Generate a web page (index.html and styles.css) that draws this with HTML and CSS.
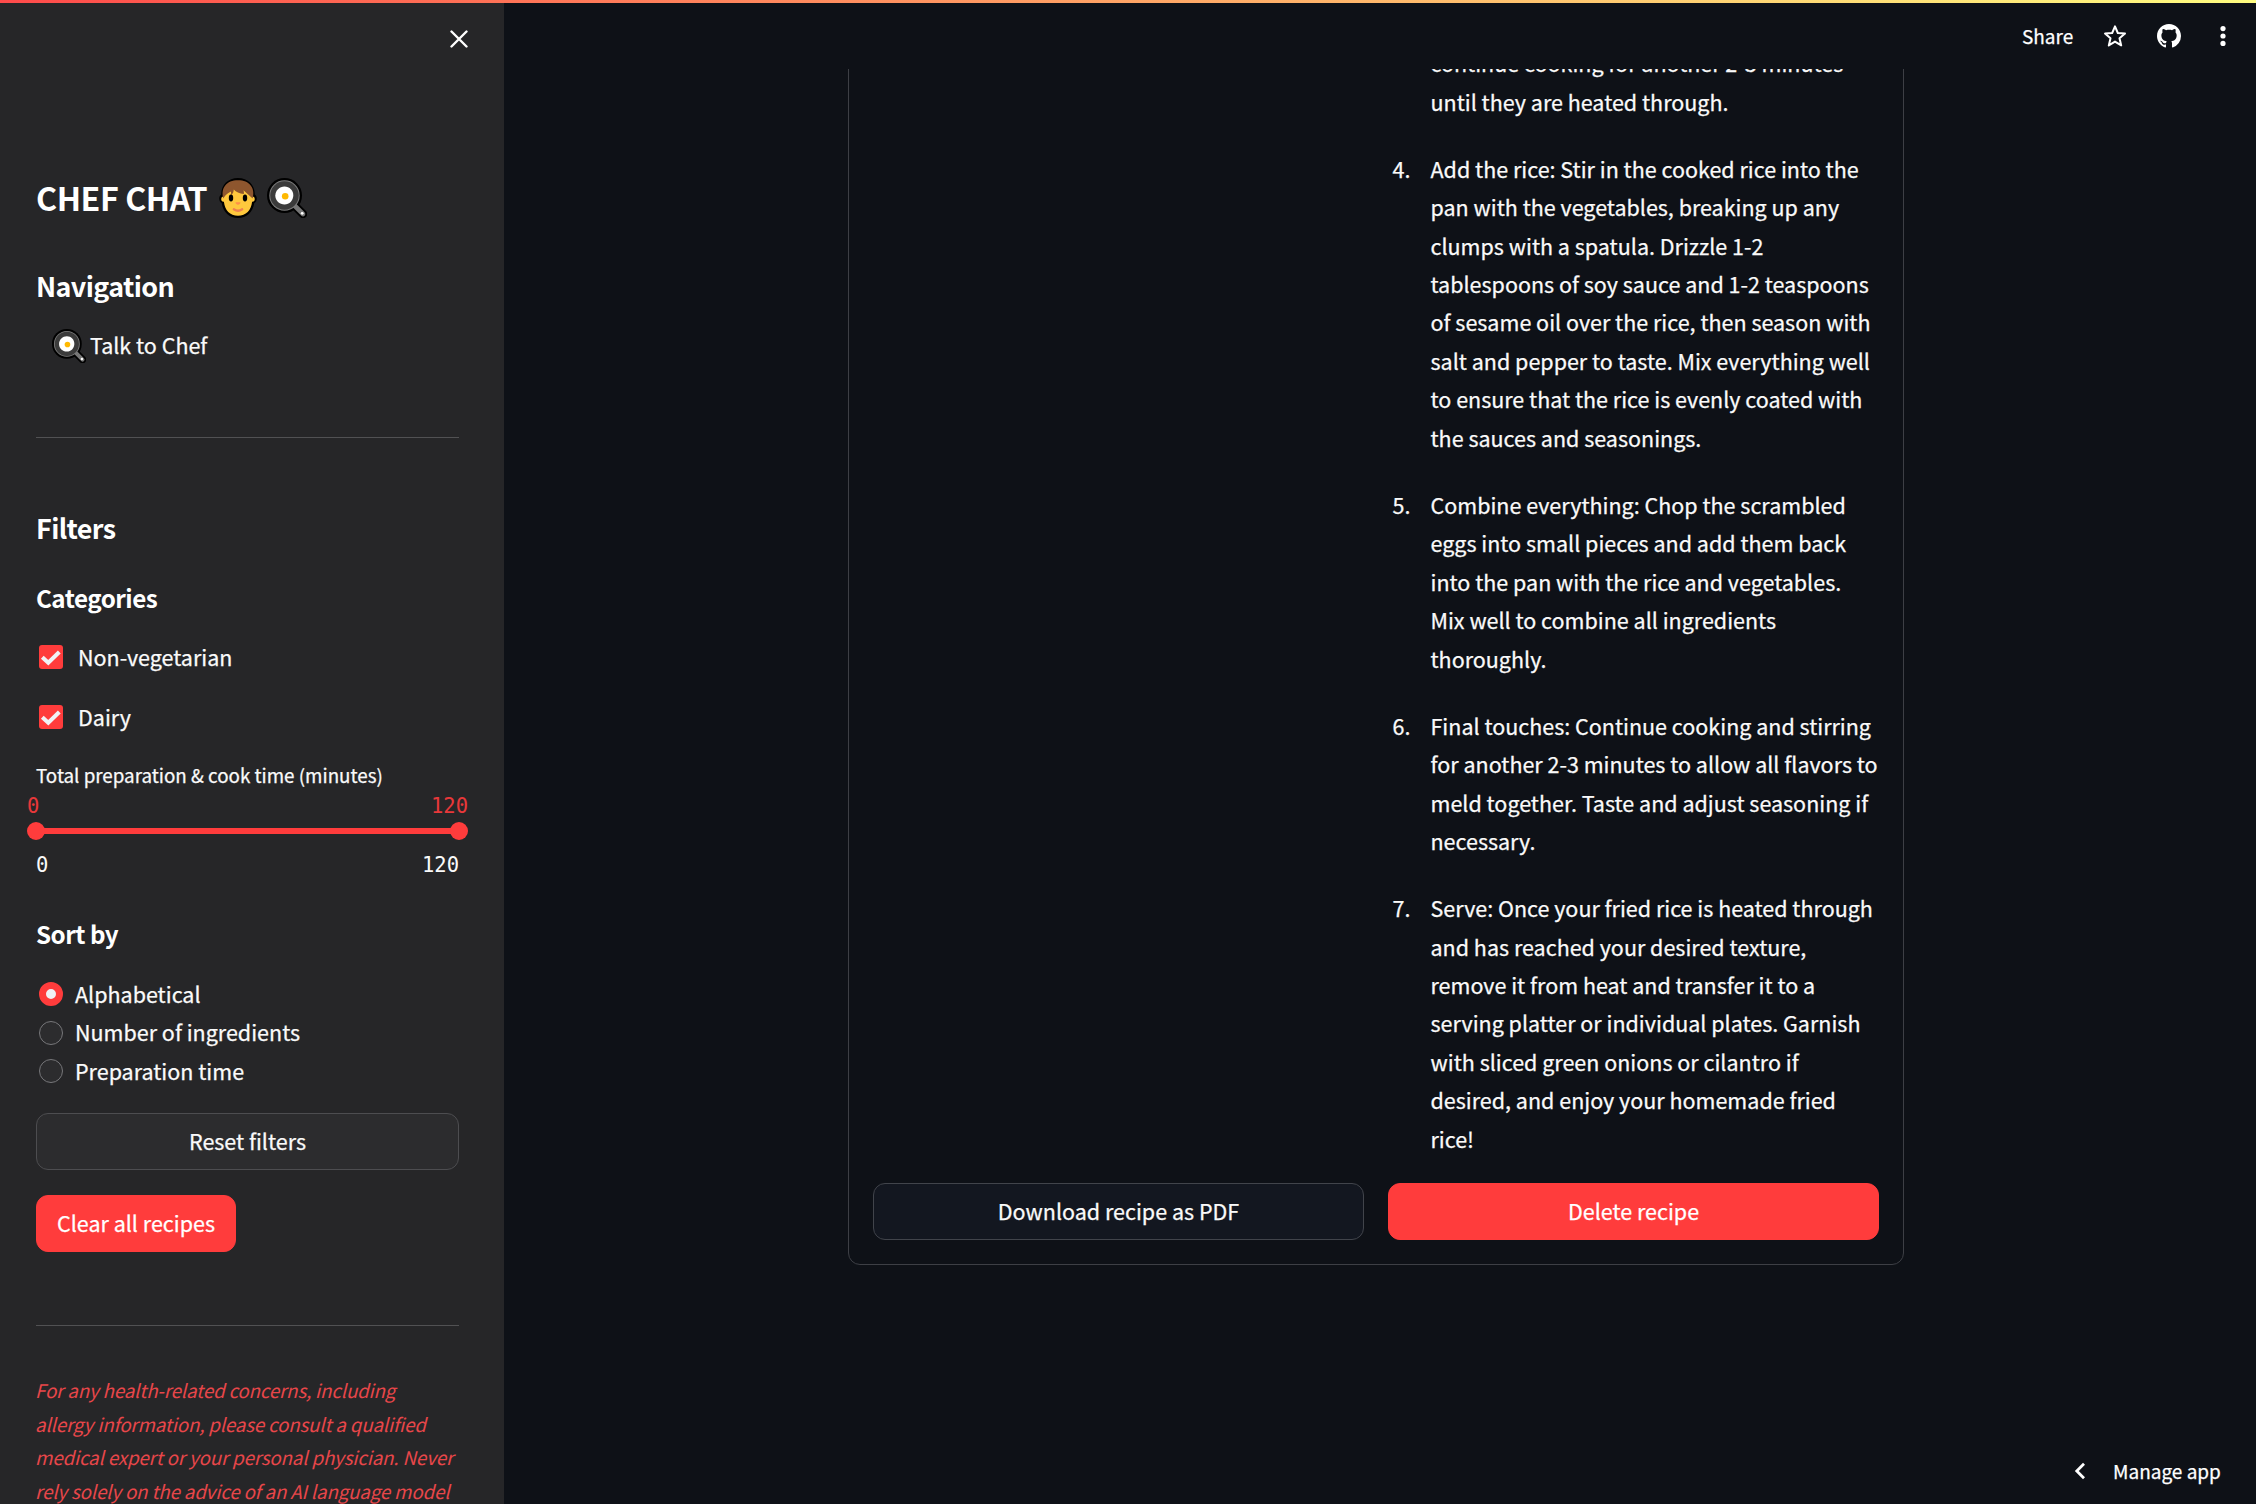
FILE: index.html
```html
<!DOCTYPE html>
<html lang="en">
<head>
<meta charset="utf-8">
<title>Chef Chat</title>
<link rel="stylesheet" href="styles.css">
</head>
<body>
<svg class="defs" aria-hidden="true">
  <symbol id="pan" viewBox="0 0 40 40">
    <path d="M27.500 27.500L36 36" stroke="#000" stroke-width="8.500" stroke-linecap="round"/>
    <circle cx="17.500" cy="17.500" r="17.500" fill="#000"/>
    <path d="M27 27L36 36" stroke="#767676" stroke-width="4.600" stroke-linecap="round"/>
    <circle cx="17.500" cy="17.500" r="15.200" fill="#7c7c7c"/>
    <circle cx="17.500" cy="17.500" r="14.200" fill="#3b3b3b"/>
    <path d="M17.500 8.600c5 0 9 4 8.800 9-.2 5-3.800 9-8.800 9s-9.300-4-9.200-9c.1-5 4.200-9 9.200-9z" fill="#fff"/>
    <circle cx="18.200" cy="18.300" r="3.300" fill="#ffb900"/>
    <circle cx="35.200" cy="35.300" r="1.400" fill="#fff"/>
  </symbol>
  <symbol id="tick" viewBox="0 0 24 24">
    <path d="M3.300 12.200L9.300 17.800L20.300 7" fill="none" stroke="#f0f2f6" stroke-width="4"/>
  </symbol>
</svg>
<div class="rainbow"></div>
<div class="app">
  <aside class="sidebar">
    <svg class="close" viewBox="0 0 18 18"><path d="M1.500 1.500L16.500 16.500M16.500 1.500L1.500 16.500" stroke="#fff" stroke-width="2.400" stroke-linecap="round"/></svg>
    <h1 class="title"><span class="title-text">CHEF CHAT</span>
      <svg class="face" viewBox="0 0 38 40">
        <path d="M19 0C29 0 36 7 35.800 16.500C38.500 18 38.500 23.500 35.300 25C34 34 27.500 40 19 40S4 34 2.700 25C-.5 23.500-.5 18 2.200 16.500C2 7 9 0 19 0z" fill="#000"/>
        <path d="M4.500 18.500C1.200 18.500 1.600 24.300 4.900 23.800C5.800 32.500 11 37.800 19 37.800S32.200 32.500 33.100 23.800C36.400 24.300 36.800 18.500 33.500 18.500L31 9H7z" fill="#ffc83d"/>
        <path d="M4.300 20.500C1.500 10 7.500 2.300 19 2.300S36.500 10 33.700 20.500C30.500 18 28 15 24.500 12.200C25 14 25 15 24.800 16C20.500 15.500 17 14 14.800 11.500C14.500 14 14 15.500 12.500 17C12 16 12 15 12 13.500C8 15.500 6.500 17 4.300 20.500z" fill="#8e562e"/>
        <ellipse cx="12" cy="20" rx="2.200" ry="3.400" fill="#000"/><ellipse cx="26" cy="20" rx="2.200" ry="3.400" fill="#000"/>
        <path d="M16.500 24.300h5c0 3.200-5 3.200-5 0z" fill="#ff8f4a"/>
        <path d="M14.800 31.300c2.500 1.700 5.900 1.700 8.400 0" fill="none" stroke="#ee8150" stroke-width="2.300" stroke-linecap="round"/>
      </svg>
      <svg class="pan-large"><use href="#pan"/></svg>
    </h1>
    <h2 class="heading nav-heading">Navigation</h2>
    <a class="nav-link"><svg class="pan-small"><use href="#pan"/></svg><span>Talk to Chef</span></a>
    <div class="divider"></div>
    <h2 class="heading filters-heading">Filters</h2>
    <h3 class="subheading categories-heading">Categories</h3>
    <div class="checks">
      <label class="check"><svg class="box"><use href="#tick"/></svg><span>Non-vegetarian</span></label>
      <label class="check"><svg class="box"><use href="#tick"/></svg><span>Dairy</span></label>
    </div>
    <div class="slider-label"><span>Total preparation &amp; cook time (minutes)</span></div>
    <div class="slider-values"><span>0</span><span>120</span></div>
    <div class="slider"><i class="knob"></i><i class="track"></i><i class="knob"></i></div>
    <div class="slider-limits"><span>0</span><span>120</span></div>
    <h3 class="subheading sort-heading">Sort by</h3>
    <div class="radios">
      <label class="radio"><i class="dot dot-on"></i><span>Alphabetical</span></label>
      <label class="radio"><i class="dot"></i><span>Number of ingredients</span></label>
      <label class="radio"><i class="dot"></i><span>Preparation time</span></label>
    </div>
    <button class="button reset">Reset filters</button>
    <button class="button primary clear">Clear all recipes</button>
    <div class="divider divider-low"></div>
    <p class="notice">For any health-related concerns, including<br>allergy information, please consult a qualified<br>medical expert or your personal physician. Never<br>rely solely on the advice of an AI language model</p>
  </aside>
  <main class="main">
    <header class="toolbar">
      <span class="share">Share</span>
      <svg class="star" viewBox="0 0 24 24"><path d="M12 2.400L14.800 9L22 9.600L16.500 14.300L18.200 21.400L12 17.600L5.800 21.400L7.500 14.300L2 9.600L9.200 9z" fill="none" stroke="#fff" stroke-width="2" stroke-linejoin="round"/></svg>
      <svg class="github" viewBox="0 0 16 16"><path fill="#fff" d="M8 0C3.580 0 0 3.580 0 8c0 3.540 2.290 6.530 5.470 7.590.4.070.55-.17.55-.38 0-.19-.01-.82-.01-1.490-2.010.37-2.530-.49-2.690-.94-.09-.23-.48-.94-.82-1.130-.28-.15-.68-.52-.01-.53.63-.01 1.080.58 1.230.82.72 1.210 1.870.87 2.330.66.07-.52.28-.87.51-1.070-1.780-.2-3.640-.89-3.640-3.950 0-.87.31-1.590.82-2.150-.08-.2-.36-1.020.08-2.120 0 0 .67-.21 2.200.82.64-.18 1.320-.27 2-.27s1.360.09 2 .27c1.530-1.040 2.200-.82 2.200-.82.44 1.100.16 1.920.08 2.120.51.56.82 1.270.82 2.150 0 3.070-1.870 3.750-3.650 3.950.29.25.54.73.54 1.480 0 1.070-.01 1.930-.01 2.200 0 .21.15.46.55.38A8.010 8.010 0 0 0 16 8c0-4.420-3.580-8-8-8z"/></svg>
      <svg class="more" viewBox="0 0 6 20"><circle cx="3" cy="2.600" r="2.600" fill="#fff"/><circle cx="3" cy="10" r="2.600" fill="#fff"/><circle cx="3" cy="17.400" r="2.600" fill="#fff"/></svg>
    </header>
    <div class="viewport">
      <section class="card">
        <div class="steps">
          <div class="step"><span class="num"></span><p>continue cooking for another 2-3 minutes<br>until they are heated through.</p></div>
          <div class="step"><span class="num">4.</span><p>Add the rice: Stir in the cooked rice into the<br>pan with the vegetables, breaking up any<br>clumps with a spatula. Drizzle 1-2<br>tablespoons of soy sauce and 1-2 teaspoons<br>of sesame oil over the rice, then season with<br>salt and pepper to taste. Mix everything well<br>to ensure that the rice is evenly coated with<br>the sauces and seasonings.</p></div>
          <div class="step"><span class="num">5.</span><p>Combine everything: Chop the scrambled<br>eggs into small pieces and add them back<br>into the pan with the rice and vegetables.<br>Mix well to combine all ingredients<br>thoroughly.</p></div>
          <div class="step"><span class="num">6.</span><p>Final touches: Continue cooking and stirring<br>for another 2-3 minutes to allow all flavors to<br>meld together. Taste and adjust seasoning if<br>necessary.</p></div>
          <div class="step"><span class="num">7.</span><p>Serve: Once your fried rice is heated through<br>and has reached your desired texture,<br>remove it from heat and transfer it to a<br>serving platter or individual plates. Garnish<br>with sliced green onions or cilantro if<br>desired, and enjoy your homemade fried<br>rice!</p></div>
        </div>
        <div class="actions">
          <button class="button download">Download recipe as PDF</button>
          <button class="button primary">Delete recipe</button>
        </div>
      </section>
    </div>
    <footer class="manage">
      <svg class="chevron" viewBox="0 0 12 18"><path d="M10 1.800L2.800 9L10 16.200" fill="none" stroke="#fff" stroke-width="2.800"/></svg>
      <span>Manage app</span>
    </footer>
  </main>
</div>
</body>
</html>
```
FILE: styles.css
```css
* { box-sizing: border-box; }
body {
  margin: 0;
  height: 1505px;
  overflow: hidden;
  background: #fff;
  color: #fafafa;
  font-family: "Noto Sans CJK SC", "Noto Sans", sans-serif;
  font-size: 21.500px;
  line-height: 38.400px;
  white-space: nowrap;
  -webkit-text-stroke: 0.25px currentColor;
}
h1, h2, h3, p { margin: 0; }
h1, h2, h3 { -webkit-text-stroke: 0; }
svg { display: block; flex: none; }
.defs { display: none; }
.rainbow { height: 3px; background: linear-gradient(90deg, #ff4b4b, #fffd80); }
.app { display: flex; height: 1501px; }

.sidebar {
  width: 504px;
  flex: none;
  display: flex;
  flex-direction: column;
  padding: 27px 45px 0 36px;
  background: #262628;
  overflow: hidden;
}
.close { width: 18px; height: 18px; margin: 0 -9px 0 auto; }
.title { display: flex; align-items: center; height: 43px; margin-top: 128px; font-size: 32.200px; line-height: 43px; font-weight: 700; color: #fff; letter-spacing: -0.450px; }
.title-text { width: 183px; }
.face { width: 38px; height: 40px; }
.pan-large { width: 40px; height: 40px; margin-left: 10px; }
.heading { font-size: 26.900px; line-height: 36px; font-weight: 700; color: #fff; letter-spacing: -0.600px; }
.nav-heading { margin-top: 49px; }
.nav-link { display: flex; align-items: center; height: 38px; margin: 22px 0 0 16px; gap: 4px; }
.pan-small { width: 34px; height: 34px; margin-top: 2px; }
.divider { flex: none; height: 1px; margin-top: 73px; background: #515153; }
.filters-heading { margin-top: 72px; }
.subheading { font-size: 24.200px; line-height: 32px; font-weight: 700; color: #fff; letter-spacing: -0.500px; }
.categories-heading { margin-top: 36px; }
.checks { display: flex; flex-direction: column; gap: 22px; margin-top: 24px; }
.check { display: flex; align-items: center; height: 38px; padding-left: 3px; gap: 15px; }
.box { width: 24px; height: 24px; border-radius: 3px; background: #ff3c3c; }
.slider-label { margin-top: 24px; font-size: 18.800px; line-height: 30px; }
.slider-values, .slider-limits { display: flex; justify-content: space-between; font: 20.500px/24px "DejaVu Sans Mono", monospace; -webkit-text-stroke: 0; }
.slider-values { margin: 4px -9px 0; color: #e8383a; }
.slider { display: flex; align-items: center; height: 18px; margin: 4px -9px 0; }
.knob { width: 18px; height: 18px; border-radius: 50%; background: #ff3c3c; }
.track { flex: 1; height: 6px; margin: 0 -1px; background: #ff3c3c; }
.slider-limits { margin-top: 13px; }
.sort-heading { margin-top: 41px; }
.radios { margin-top: 25px; }
.radio { display: flex; align-items: center; height: 38.400px; padding-left: 3px; gap: 12px; }
.dot { width: 24px; height: 24px; border: 1.500px solid #77777a; border-radius: 50%; background: #2c2c2e; }
.dot-on { border: 7.500px solid #ff3c3c; background: #f0f2f6; }
.button {
  flex: none;
  height: 57px;
  padding: 0 0 1px;
  border: 1px solid #4d4d50;
  border-radius: 12px;
  background: #2c2c2e;
  color: #fafafa;
  font: inherit;
}
.primary { border-color: #ff3c3c; background: #ff3c3c; color: #fff; }
.reset { margin-top: 23px; }
.clear { width: 200px; margin-top: 25px; }
.divider-low { margin-top: 73px; }
.notice { margin: 47px 0 0 -1px; font-size: 18.800px; line-height: 33.600px; font-style: italic; color: #e8464a; letter-spacing: -0.180px; -webkit-text-stroke: 0; }

.main { flex: 1; display: flex; flex-direction: column; background: #0e1117; }
.toolbar { display: flex; align-items: center; flex: none; height: 66px; padding-left: 1518px; font-size: 19px; }
.share { width: 81px; color: #fff; }
.star { width: 24px; height: 24px; }
.github { width: 24px; height: 24px; margin-left: 30px; }
.more { width: 6px; height: 20px; margin-left: 39px; }
.viewport { display: flex; flex-direction: column; justify-content: flex-end; flex: none; height: 1196px; overflow: hidden; padding-left: 344px; }
.card { flex: none; width: 1056px; padding: 60px 24px 24px; border: 1px solid #3d3f45; border-radius: 12px; }
.steps { display: flex; flex-direction: column; gap: 28.800px; margin-left: 514.500px; }
.step { display: grid; grid-template-columns: 23px 1fr; column-gap: 20px; }
.num { text-align: right; }
.actions { display: grid; grid-template-columns: 491px 491px; justify-content: space-between; margin-top: 25px; }
.download { background: #131720; border-color: #41444b; }
.manage { display: flex; align-items: center; height: 38px; margin-top: 187px; padding-left: 1570px; gap: 27px; font-size: 19px; color: #fff; }
.chevron { width: 12px; height: 18px; }
```
